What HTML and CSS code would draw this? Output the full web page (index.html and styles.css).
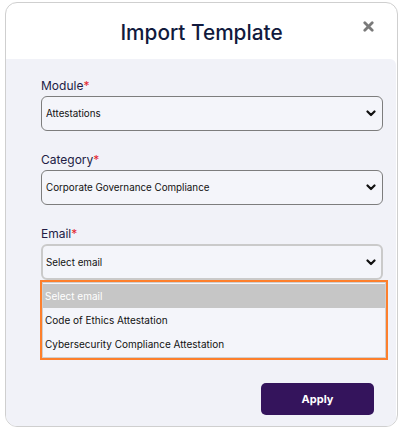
FILE: index.html
```html
<!DOCTYPE html>
<html>
<head>
<meta charset="utf-8">
<link rel="stylesheet" href="styles.css">
</head>
<body>
<div class="modal">
  <header class="modal-head">
    <span></span>
    <h1 class="title">Import Template</h1>
    <button class="close" aria-label="Close">
      <svg width="11" height="11" viewBox="0 0 11 11"><path d="M1.8 1.8 L9.2 9.2 M9.2 1.8 L1.8 9.2" stroke="#7a7a7a" stroke-width="2.8" stroke-linecap="round"/></svg>
    </button>
  </header>
  <div class="modal-body">
    <div class="field">
      <label class="label">Module<span class="req">*</span></label>
      <div class="select"><span>Attestations</span><svg class="chev" width="10" height="7" viewBox="0 0 10 7"><path d="M1.5 1.5 L5 5 L8.5 1.5" fill="none" stroke="#111" stroke-width="2.2" stroke-linecap="round" stroke-linejoin="round"/></svg></div>
    </div>
    <div class="field">
      <label class="label">Category<span class="req">*</span></label>
      <div class="select"><span>Corporate Governance Compliance</span><svg class="chev" width="10" height="7" viewBox="0 0 10 7"><path d="M1.5 1.5 L5 5 L8.5 1.5" fill="none" stroke="#111" stroke-width="2.2" stroke-linecap="round" stroke-linejoin="round"/></svg></div>
    </div>
    <div class="field field-last">
      <label class="label">Email<span class="req">*</span></label>
      <div class="select focused"><span>Select email</span><svg class="chev" width="10" height="7" viewBox="0 0 10 7"><path d="M1.5 1.5 L5 5 L8.5 1.5" fill="none" stroke="#111" stroke-width="2.2" stroke-linecap="round" stroke-linejoin="round"/></svg></div>
      <ul class="listbox">
        <li class="opt selected">Select email</li>
        <li class="opt">Code of Ethics Attestation</li>
        <li class="opt">Cybersecurity Compliance Attestation</li>
      </ul>
    </div>
    <div class="actions">
      <button class="apply">Apply</button>
    </div>
  </div>
</div>
</body>
</html>
```
FILE: styles.css
```css
* { box-sizing: border-box; }
html, body { margin: 0; padding: 0; background: #fff; }
body { font-family: Inter, "Noto Sans", sans-serif; }

.modal {
  margin: 2px 5px 0 5px;
  width: 393px;
  height: 425px;
  border: 1px solid #cfcfcf;
  border-radius: 12px;
  overflow: hidden;
  display: flex;
  flex-direction: column;
  background: #fff;
}

.modal-head {
  flex-shrink: 0;
  height: 56px;
  display: grid;
  grid-template-columns: 1fr auto 1fr;
  align-items: center;
}
.title {
  margin: 0;
  font-size: 20.8px;
  font-weight: 500;
  color: #111a3d;
  padding-top: 3px;
}
.close {
  justify-self: end;
  margin-right: 23px;
  margin-top: -9px;
  border: 0;
  background: none;
  padding: 0;
  width: 11px;
  height: 11px;
  display: flex;
}

.modal-body {
  flex: 1;
  background: #f1f2f8;
  border-radius: 0 6px 0 0;
  margin-right: 1px;
  padding: 19px 13px 0 35px;
  display: flex;
  flex-direction: column;
}

.field { display: flex; flex-direction: column; margin-bottom: 21px; }
.field-last { margin-bottom: 0; }
.label {
  font-size: 12px;
  line-height: 16px;
  color: #221c45;
  margin-bottom: 2px;
}
.req { color: #e3262f; }

.select {
  height: 35px;
  border: 1px solid #7d7d7d;
  border-radius: 6px;
  background: #f4f5fa;
  display: flex;
  align-items: center;
  justify-content: space-between;
  padding: 0 6px 0 4px;
  font-size: 9.8px;
  color: #111;
}
.select.focused {
  height: 36px;
  border: 2px solid #cacaca;
  padding-left: 3px;
  padding-right: 5px;
}
.chev { display: block; }

.listbox {
  list-style: none;
  margin: 0 0 0 -1px;
  padding: 2px 0 2px 0;
  width: 348px;
  border: 2px solid #fd7f2c;
  box-shadow: inset 0 0 0 1px #cfcfcf;
  background: #f4f5fa;
}
.opt {
  height: 24px;
  line-height: 24px;
  padding-left: 2px;
  font-size: 10px;
  color: #111;
  margin: 0 1px;
}
.opt.selected { background: #c6c6c6; color: #fff; }

.actions {
  display: flex;
  justify-content: flex-end;
  padding: 23px 9px 0 0;
}
.apply {
  width: 113px;
  height: 32px;
  border: 0;
  border-radius: 5px;
  background: #34145c;
  color: #fff;
  font-family: Inter, sans-serif;
  font-weight: 700;
  font-size: 11px;
}
```
